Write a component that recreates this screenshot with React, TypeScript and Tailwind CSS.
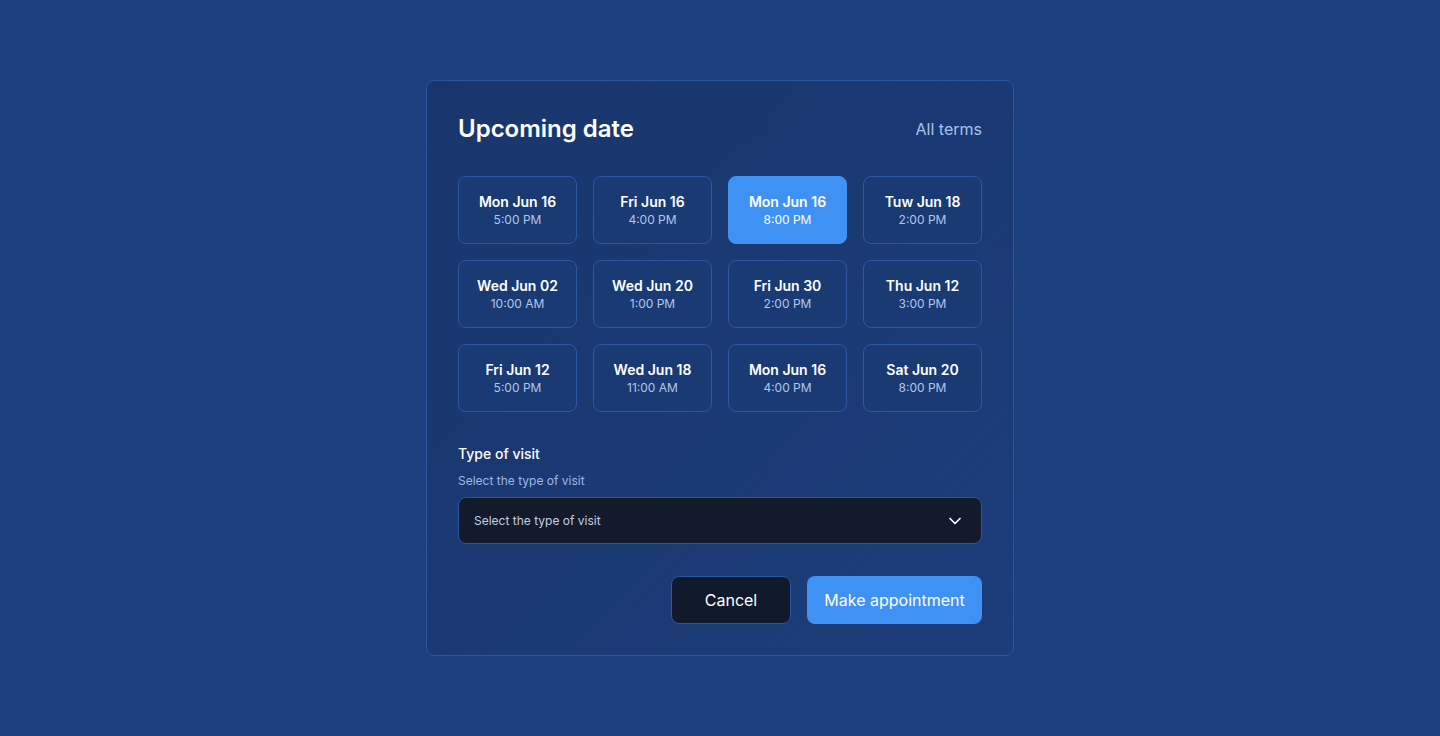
import { ChevronDown } from 'lucide-react';

type Slot = { day: string; time: string; active?: boolean };

const slots: Slot[] = [
  { day: 'Mon Jun 16', time: '5:00 PM' },
  { day: 'Fri Jun 16', time: '4:00 PM' },
  { day: 'Mon Jun 16', time: '8:00 PM', active: true },
  { day: 'Tuw Jun 18', time: '2:00 PM' },
  { day: 'Wed Jun 02', time: '10:00 AM' },
  { day: 'Wed Jun 20', time: '1:00 PM' },
  { day: 'Fri Jun 30', time: '2:00 PM' },
  { day: 'Thu Jun 12', time: '3:00 PM' },
  { day: 'Fri Jun 12', time: '5:00 PM' },
  { day: 'Wed Jun 18', time: '11:00 AM' },
  { day: 'Mon Jun 16', time: '4:00 PM' },
  { day: 'Sat Jun 20', time: '8:00 PM' },
];

export default function App() {
  return (
    <div
      className="min-h-[736px] w-full bg-[#1c3f7e] flex justify-center pt-[80px]"
      style={{ fontFamily: 'Inter, "Liberation Sans", sans-serif' }}
    >
      <div className="w-[588px] h-[576px] rounded-lg border border-[#2a55a0] bg-gradient-to-br from-[#19366c] to-[#1c3d7a] p-[31px] flex flex-col">
        {/* Header */}
        <div className="flex items-center justify-between h-8 pt-[2px]">
          <h1 className="text-[24px] font-semibold text-white">Upcoming date</h1>
          <button className="text-base text-[#a9c2ec]">All terms</button>
        </div>

        {/* Slots */}
        <div className="grid grid-cols-4 gap-4 mt-8">
          {slots.map((s, i) => (
            <button
              key={i}
              className={`h-[68px] rounded-lg flex flex-col items-center justify-center border ${
                s.active
                  ? 'bg-[#3f92f4] border-[#3f92f4]'
                  : 'bg-[#1a3a73] border-[#2b56a3]'
              }`}
            >
              <span className="text-[14px] font-semibold text-white leading-5">{s.day}</span>
              <span className={`text-[12px] leading-4 ${s.active ? 'text-white' : 'text-[#b3c7ea]'}`}>
                {s.time}
              </span>
            </button>
          ))}
        </div>

        {/* Type of visit */}
        <div className="mt-8">
          <div className="text-[14px] font-medium text-white leading-5">Type of visit</div>
          <div className="text-[12px] text-[#9db7e6] leading-4 mt-[9px]">Select the type of visit</div>
          <div className="mt-2 h-[47px] rounded-lg bg-[#121a2c] border border-[#2b56a3] flex items-center justify-between pl-[15px] pr-4">
            <span className="text-[12px] text-[#c3cee2]">Select the type of visit</span>
            <ChevronDown className="w-5 h-5 text-white" strokeWidth={2} />
          </div>
        </div>

        {/* Actions */}
        <div className="flex justify-end gap-4 mt-auto">
          <button className="h-12 w-[120px] rounded-lg bg-[#111a2c] border border-[#2b56a3] text-white text-base">
            Cancel
          </button>
          <button className="h-12 w-[175px] rounded-lg bg-[#3f92f4] text-white text-base">
            Make appointment
          </button>
        </div>
      </div>
    </div>
  );
}
